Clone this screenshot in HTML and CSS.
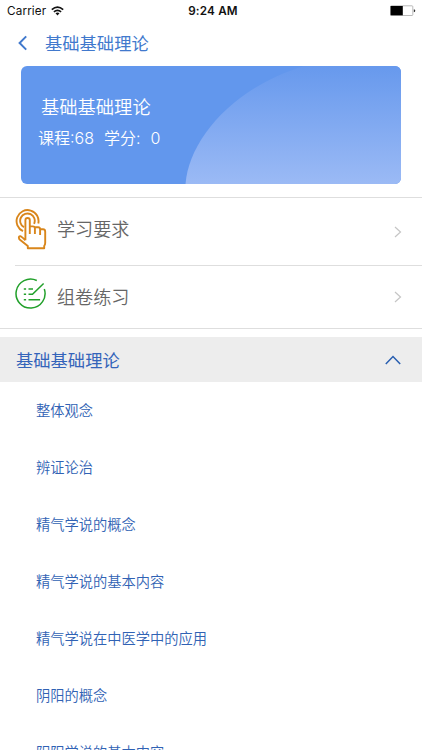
FILE: index.html
```html
<!DOCTYPE html>
<html lang="zh-CN">
<head>
<meta charset="utf-8">
<title>基础基础理论</title>
<link rel="stylesheet" href="styles.css">
</head>
<body>
<header class="status">
  <div class="carrier"><span>Carrier</span>
    <svg width="13" height="10" viewBox="0 0 13 10" fill="none" stroke="#111" stroke-width="1.7"><path d="M.8 3.6Q6.5-1.4 12.2 3.6M2.9 5.8q3.6-3 7.2 0"/><path d="M4.5 7.3q2-1.4 4 0l-2 2.1z" fill="#111" stroke="none"/></svg>
  </div>
  <div class="clock">9:24 AM</div>
  <svg class="battery" width="26" height="12" viewBox="0 0 26 12"><rect x=".5" y=".8" width="22.3" height="9.7" rx=".8" fill="#fff" stroke="#aaa" stroke-width=".8"/><path d="M.6 1h12.2v9.3H.6z"/><path d="M23.8 4.2q1.5.2 1.5 1.5t-1.5 1.5z" fill="#333"/></svg>
</header>
<nav class="nav">
  <svg width="10" height="16" viewBox="0 0 10 16" fill="none" stroke="#4179cd" stroke-width="2"><path d="M9.2 1.4 2.6 8l6.600 6.600"/></svg>
  <h1>基础基础理论</h1>
</nav>
<section class="card">
  <svg class="curve" width="380" height="118" viewBox="0 0 380 118"><defs><linearGradient id="fade" x1="0" y1="0" x2="0" y2="1"><stop offset="0" stop-color="#6799ed"/><stop offset="1" stop-color="#9bbaf5"/></linearGradient></defs><path fill="url(#fade)" d="M164.5 118C168 74 211 22 283 0H380V118Z"/></svg>
  <div class="card-text">
    <h2>基础基础理论</h2>
    <p><span>课程:68</span><span class="credit">学分:</span><span class="score">0</span></p>
  </div>
</section>
<main>
  <div class="menu">
    <a class="entry first">
      <svg width="32" height="42" viewBox="0 0 32 42" fill="none" stroke="#d9861b" stroke-width="1.9" stroke-linejoin="round"><path d="M8 22.100A11 11 0 1 1 23.300 14.500M9 18.200A7.300 7.300 0 1 1 19.100 14.800"/><path d="M10.400 31.300V11.200a2.200 2.200 0 0 1 4.400 0V25M14.800 17.400h3.100q2 0 2 2.200V25M19.900 18.300h3.200q2 0 2 2.200V26M25.100 20.300h2.900q2.200 0 2.200 2.400V34q0 1.600-1 3v2.300H12.800V37L4.300 30.200Q2.900 27.100 5.700 27.300 7.600 28.600 10.400 31.300"/></svg>
      <span>学习要求</span>
      <svg class="arrow" width="8" height="12" viewBox="0 0 8 12"><path d="M1 1l5.500 5L1 11"/></svg>
    </a>
    <a class="entry second">
      <svg width="32" height="32" viewBox="0 0 32 32" fill="none" stroke="#22a02b" stroke-width="1.5"><path d="M21.800 2.500A14.500 14.500 0 1 0 29.300 11"/><path d="M28.600 5.500 17.500 16.300h-4M13.500 10.900h4.500M13.500 21.700h11.600M8.800 10.900h2.300M8.800 16.300h2.300M8.800 21.700h2.300"/></svg>
      <span>组卷练习</span>
      <svg class="arrow" width="8" height="12" viewBox="0 0 8 12"><path d="M1 1l5.500 5L1 11"/></svg>
    </a>
  </div>
  <div class="chapter"><h3>基础基础理论</h3>
    <svg width="16" height="10" viewBox="0 0 16 10" fill="none" stroke="#285eb0" stroke-width="1.500"><path d="M.8 9 8 1.500 15.200 9"/></svg>
  </div>
  <ul class="topics">
    <li>整体观念</li>
    <li>辨证论治</li>
    <li>精气学说的概念</li>
    <li>精气学说的基本内容</li>
    <li>精气学说在中医学中的应用</li>
    <li>阴阳的概念</li>
    <li>阴阳学说的基本内容</li>
  </ul>
</main>
</body>
</html>
```
FILE: styles.css
```css
* { box-sizing: border-box; margin: 0; padding: 0; }
body {
  width: 422px; height: 750px; overflow: hidden; background: #fff;
  font-family: "Liberation Sans", "Noto Sans CJK SC", sans-serif;
}
h1, h2, h3 { font-weight: 400; }
svg { display: block; flex: none; }
.status {
  display: grid; grid-template-columns: 1fr auto 1fr; align-items: center;
  height: 22px; padding: 0 6px 0 7px; color: #111;
  font-family: Inter, sans-serif; font-size: 11.7px;
}
.carrier { display: flex; align-items: center; gap: 5px; letter-spacing: .15px; }
.clock { font-weight: 600; letter-spacing: .2px; padding-left: 3px; }
.battery { justify-self: end; }
.nav { display: flex; align-items: center; height: 44px; padding: 0 0 2px 17px; gap: 18px; color: #4179cd; }
.nav h1 { font-size: 17.3px; line-height: 24px; padding-top: 2px; }
.card {
  position: relative; width: 380px; height: 118px; margin-left: 21px;
  overflow: hidden; border-radius: 6px; background: #6297ed; color: #fff;
}
.curve { position: absolute; inset: 0; }
.card-text { position: relative; padding: 28px 0 0 17px; }
.card h2 { padding-left: 3px; font-size: 18.3px; line-height: 28px; font-weight: 350; }
.card p { display: flex; font-family: Inter, "Noto Sans CJK SC", sans-serif; font-size: 16px; line-height: 24px; padding-top: 4px; font-weight: 350; }
.credit { margin-left: 10px; }
.score { margin-left: 10px; }
.menu { margin-top: 13px; border-top: 1px solid #dedede; border-bottom: 1px solid #dedede; }
.entry { display: flex; align-items: center; margin-left: 15px; padding-right: 20px; color: #666; font-size: 18.1px; font-weight: 350; }
.entry span { margin-left: 10px; line-height: 26px; }
.first { height: 68px; padding-bottom: 4px; border-bottom: 1px solid #dedede; }
.second { height: 62px; }
.second span { padding-top: 2px; }
.second > svg:first-child { margin-bottom: 7px; }
.arrow { margin-left: auto; fill: none; stroke: #c5c5c5; stroke-width: 1.2; }
.first .arrow { margin-top: 4px; }
.chapter { display: flex; align-items: center; justify-content: space-between; height: 45px; margin-top: 8px; padding: 0 21px 0 16px; background: #ededed; color: #3464ba; }
.chapter h3 { font-size: 17.3px; line-height: 26px; padding-top: 2px; }
.topics { list-style: none; padding: 1px 0 0 36px; color: #3062b4; font-size: 14.25px; font-weight: 350; }
.topics li { height: 57px; line-height: 57px; }
```
